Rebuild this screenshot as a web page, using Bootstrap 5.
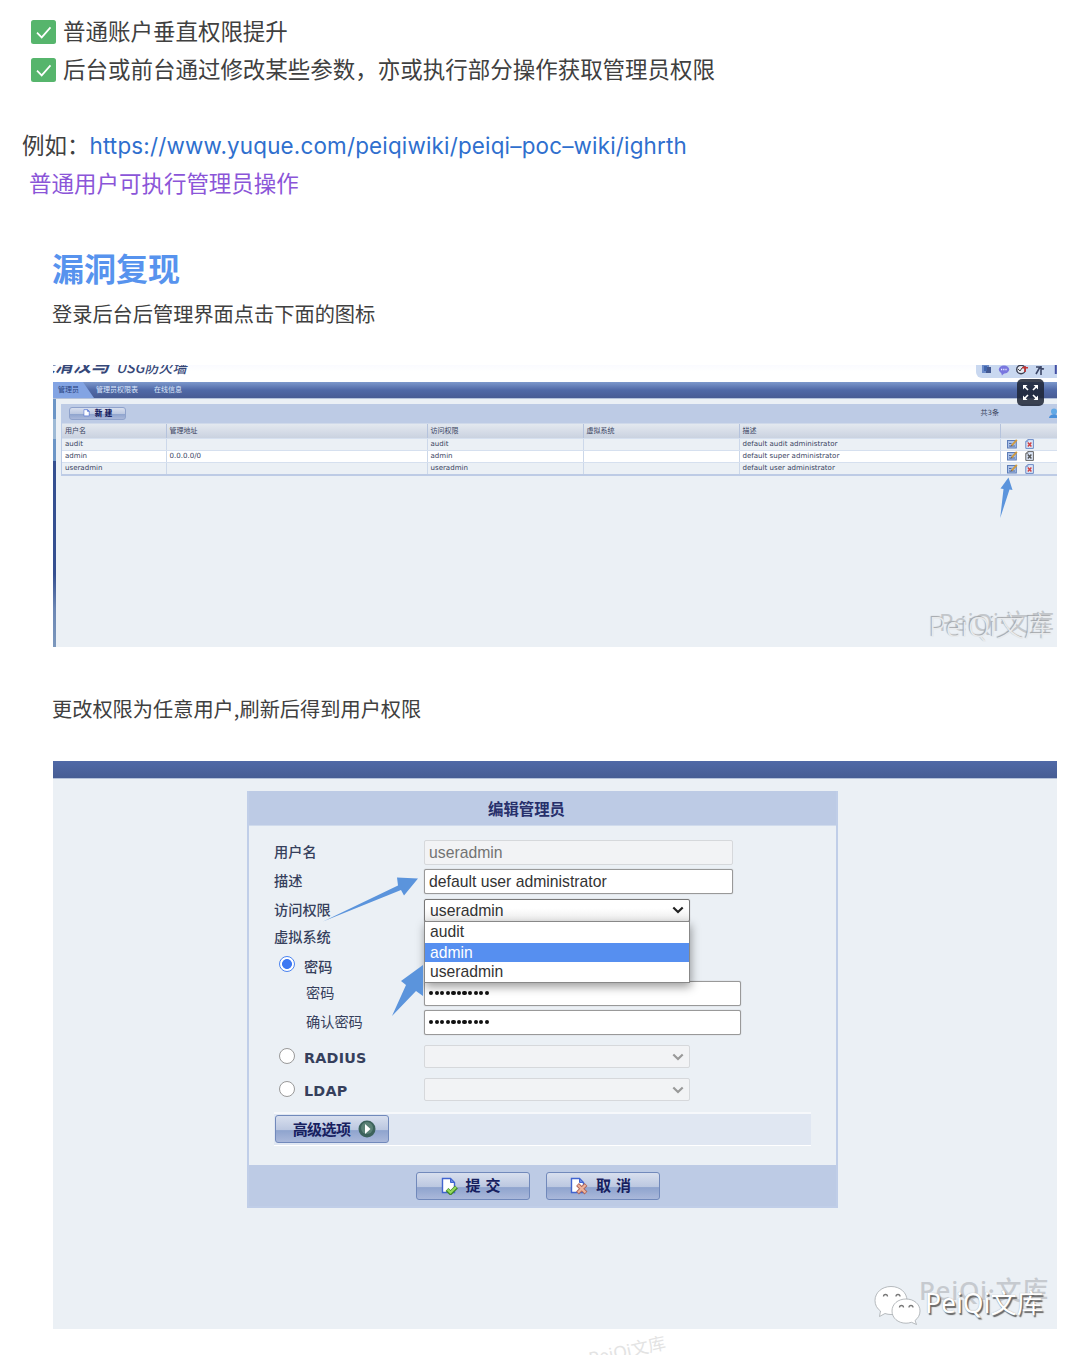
<!DOCTYPE html>
<html lang="zh-CN">
<head>
<meta charset="utf-8">
<title>权限提升</title>
<link href="https://cdn.jsdelivr.net/npm/bootstrap@5.3.0/dist/css/bootstrap.min.css" rel="stylesheet">
<style>
html,body{background:#fff;overflow:hidden}
body{width:1080px;height:1355px;position:relative;font-family:"Noto Sans CJK SC",sans-serif;color:#404040}
.doc-top{height:365px;padding-top:11px}
.doc-line{height:38px;font-size:22.49px;line-height:38px;white-space:nowrap}
.tick{width:25px;height:24px;margin:3px 7px 0 0;flex:none}
.doc-link{font-family:Inter,"Noto Sans CJK SC",sans-serif;font-size:22.4px;color:#2f6fce;letter-spacing:.195px;padding-top:2px}
.violet{color:#8b55d8}
.title-sec{font-size:32px;font-weight:700;color:#5793ee;line-height:46px;height:46px;margin:43px 0 0 52px}
.para{font-size:20.22px;line-height:32px;height:32px;margin:0 0 0 52px;white-space:nowrap}
.shot{position:relative;width:1004px;margin-left:53px;overflow:hidden;background:#ebf0f5;color:#39435f}
.shot-a{height:282px;font-family:"DejaVu Sans","Noto Sans CJK SC",sans-serif;font-size:7.05px}
.shot-top{height:17px;background:linear-gradient(#fafbff,#fff 40%);overflow:hidden}
.brand{color:#354778;font-style:italic;white-space:nowrap;font-family:"Noto Sans CJK SC",sans-serif;font-weight:500;height:17px;line-height:17px}
.brand .b1{font-size:18px;font-weight:700;margin:-9px 0 0 -16px}
.brand .b2{font-size:14px;margin:-6px 0 0 7px;line-height:17px}
.tools{width:81px;height:13px;background:#c9d8f0;border-bottom-left-radius:6px;padding-left:5px}
.bluebar{background:linear-gradient(#7c98cc,#5069a7 50%,#485c94);color:#dce6fa;border-bottom:1px solid #b4c1da}
.shot-a .bluebar{height:17px;font-size:7px;line-height:17px}
.tab-on{width:41px;height:16px;background:#83a4e3;color:#28417c;clip-path:polygon(0 0,30px 0,41px 100%,0 100%);padding-left:5px}
.rail{width:3px;height:248px;background:linear-gradient(#6c95c6 0 20px,#9ebad6 20px 40px,#6c95c6 40px 62px,#354f90 62px 175px,#6c87b4 210px,#7c98bd)}
.panel-a{margin:5px 0 0 5px;flex:1;border-left:1px solid #bccce7;height:72px;background:#bdcbe5}
.toolbar-a{height:18.5px}
.gloss{background:linear-gradient(#d8dfee,#bbc7e0 54%,#8fa4ce 56%,#aab8da);border:1px solid #7189bb;border-radius:3px;color:#17205f;font-weight:700;white-space:nowrap}
.btn-new{width:57px;height:13px;margin-left:7px;font-size:7.5px;font-weight:900;border-color:#8fa2cb}
.grid-a{display:grid;grid-template-columns:103.5px 261px 156px 156px 261px 1fr;white-space:nowrap}
.grid-a>div{border-left:1px solid #ccd8ea;padding-left:3px;overflow:hidden}
.grid-a>div:first-child{border-left:0}
.grid-h{height:15.3px;line-height:14.5px;font-size:7px;background:linear-gradient(#e3e8ef,#cad2e0);border-top:1px solid #cfd9ea}
.grid-h>div{border-color:#b5c3dd!important}
.grid-r{height:12.2px;line-height:9.5px;background:#ebf0f5;border-top:1px solid #d6e0ef}
.grid-r.wh{background:#fff}
.grid-r svg{display:inline-block;vertical-align:top;margin-top:.5px}
.grid-r svg.ed{margin-left:3px;margin-right:7px}
.over{position:absolute;left:0;top:0}
.expand{position:absolute;left:964px;top:13.5px;width:27px;height:27px}
.wm{position:absolute;font-family:"Noto Sans","Noto Sans CJK SC",sans-serif;font-weight:300;white-space:nowrap;line-height:1.2}
.wm-a2{left:886px;top:243px;font-size:24px;color:#c3c7cb;font-weight:400;letter-spacing:.2px}
.wm-a1{left:876px;top:245px;font-size:28.3px;color:#e8eaec;text-shadow:-1px -1px 1px #a0a3a6}
.wm-b1{left:872px;top:527px;font-size:26.5px;color:#fff;font-weight:400;text-shadow:1.5px 1.5px 1px #666,0 0 1px #999}
.wm-b2{left:866px;top:514px;font-size:26px;color:#c6cacf;font-weight:500;letter-spacing:.7px}
.wm-c{left:588px;top:1340px;font-size:17.5px;color:#e3e3e3;font-weight:400;transform:rotate(-12deg)}
.shot-b{height:568px}
.shot-b .bluebar{height:18px;background:linear-gradient(#5069a7,#465d94)}
.dlg{width:591px;margin:12px 0 0 194px;border:2px solid #c0cee8;border-top:0;background:#bdcbe5;height:417px}
.dlg-h{height:35px;line-height:35px;text-align:center;font-size:15.4px;font-weight:700;color:#27306b;padding-right:32px;border-bottom:1px solid #d0dbec}
.dlg-b{height:339px;background:#ebf0f5;padding:12px 24px 0 25px;font-size:14.2px;color:#36405c;font-weight:500}
.f-row{display:flex;align-items:center}
.f-row>.lab{width:150px;flex:none;white-space:nowrap;display:flex;align-items:center;margin-top:-1px}
.f-row>.sub{padding-left:32px;margin-top:0;font-weight:400}
.fld{border:1px solid #999;border-radius:2px;background:#fff;height:25px;font:15.75px/23px "Liberation Sans",sans-serif;color:#333;padding-left:4px;width:308.5px;white-space:nowrap;box-shadow:0 0 1px #999}
.fld.dis{background:#f2f3f5;border-color:#d6d8db;color:#737373;box-shadow:none}
.fld.pw{width:316.5px;display:flex;align-items:center;gap:1.4px}
.fld.sel{width:265.5px;height:23px;line-height:21px;padding:0 5px 0 5px;display:flex;justify-content:space-between;align-items:center}
.fld.act{background:linear-gradient(#fff 40%,#ececec);border-color:#777}
.pw i{width:4.2px;height:4.2px;border-radius:50%;background:#111}
.rad{width:16px;height:16px;border-radius:50%;border:1.5px solid #999;background:#fff;margin:0 9px 0 5px}
.rad.on{border-color:#4a83f0;background:radial-gradient(#3d78f2 0 4.6px,#fff 5.3px)}
.verd{font:700 14.3px "DejaVu Sans",sans-serif;letter-spacing:.25px;padding-top:4px}
.menu-d{position:absolute;left:371px;top:160px;width:265.5px;height:62px;background:#fff;border:1px solid #888;box-shadow:1px 4px 9px rgba(0,0,0,.38);font:15.7px/19.5px "Liberation Sans",sans-serif;color:#333}
.menu-d div{padding-left:5px;height:19.5px}
.menu-d .hl{background:#568ff0;color:#fff;margin-top:1px}
.adv{height:34px;width:537px;background:#e0e7f2;border-top:2px solid #f6f8fb;border-bottom:1px solid #fff;margin-top:6px;display:flex;align-items:center}
.gbtn{width:114px;height:28px;font-size:15px;display:flex;align-items:center;justify-content:center}
.gbtn.wide{letter-spacing:-.6px;padding-left:5px;margin:-1px 0 0 1px}
.dlg-f{height:41px;display:flex;gap:16px;padding-left:167px;align-items:center}
.dlg-f .gbtn{padding-right:5px;word-spacing:1.5px}
</style>
<script src="https://cdn.jsdelivr.net/npm/bootstrap@5.3.0/dist/js/bootstrap.bundle.min.js"></script>
</head>
<body>
<svg width="0" height="0" class="position-absolute">
 <defs>
 <symbol id="tick" viewBox="0 0 25 24"><rect width="25" height="24" rx="2.5" fill="#56b56c"/><path d="M6 12.600l4.700 4.800 8.800-10" fill="none" stroke="#fff" stroke-width="1.700"/></symbol>
 <symbol id="edit" viewBox="0 0 11 10"><rect x=".5" y="1.500" width="8.800" height="7.500" fill="#a9c0e8" stroke="#5d7db8"/><path d="M2 4.500h2.500M2 7h6" stroke="#38568f" stroke-width=".8"/><path d="M4.600 6.600L9.800.8" stroke="#cf9a3e" stroke-width="1.900"/><path d="M3.900 7.500l1-1.300" stroke="#654"/></symbol>
 <symbol id="del" viewBox="0 0 9 10"><path d="M2.800.6h5.600v8.800H.8V2.600z" fill="#dce6f8" stroke="currentColor"/><path d="M2.800.6v2H.8" fill="none" stroke="currentColor" stroke-width=".8"/><path d="M2.800 3.600l3.600 3.800m0-3.800L2.800 7.400" stroke="var(--x)" stroke-width="1.500"/></symbol>
 <symbol id="page" viewBox="0 0 17 18"><path d="M1.500 1.500h8l4 4v10h-12z" fill="#fff" stroke="#4164cf" stroke-width="1.400"/><path d="M9.500 1.500v4h4z" fill="#6b8be5" stroke="#4164cf"/></symbol>
 <symbol id="chev" viewBox="0 0 12 8"><path d="M1.300 1.500L6 6l4.700-4.500" fill="none" stroke="currentColor" stroke-width="2.200"/></symbol>
 </defs>
</svg>

<header class="doc-top">
 <div class="doc-line d-flex align-items-center" style="padding-left:31px"><svg class="tick"><use href="#tick"/></svg><span>普通账户垂直权限提升</span></div>
 <div class="doc-line d-flex align-items-center" style="padding-left:31px"><svg class="tick"><use href="#tick"/></svg><span>后台或前台通过修改某些参数，亦或执行部分操作获取管理员权限</span></div>
 <div class="doc-line"></div>
 <div class="doc-line d-flex" style="padding-left:22px"><span>例如：</span><a class="doc-link text-decoration-none" href="#">https://www.yuque.com/peiqiwiki/peiqi–poc–wiki/ighrth</a></div>
 <div class="doc-line violet" style="padding-left:29px">普通用户可执行管理员操作</div>
 <h2 class="title-sec">漏洞复现</h2>
 <p class="para mt-2">登录后台后管理界面点击下面的图标</p>
</header>

<section class="shot shot-a">
 <div class="shot-top d-flex justify-content-between">
  <div class="brand d-flex"><div class="b1">天清汉马</div><div class="b2">USG防火墙</div></div>
  <div class="tools">
   <svg width="76" height="12" viewBox="0 0 76 12" class="d-block"><rect x="1" y="0" width="7" height="8" fill="#6c8bc9"/><rect x="5" y="2" width="5" height="6" fill="#435891"/><path d="M3 1h3v5H3z" fill="#4166ad"/><ellipse cx="23" cy="4.500" rx="5.200" ry="4" fill="#7977df"/><path d="M20 7.500l1 3 3-3" fill="#7977df"/><path d="M20 4.500h6" stroke="#e9ebff" stroke-width="1.400" stroke-dasharray="1.200 1"/><circle cx="40" cy="4.500" r="4.300" fill="#e6e9f2" stroke="#3b4155" stroke-width="1.400"/><path d="M37 4l2 2 2-3" stroke="#444" fill="none"/><path d="M44 7V1m-3 1.700h6" stroke="#c43535" stroke-width="1.600"/><path d="M55 9l4-7m-4 0h5v4m0 4V1m-2 2l5 1" stroke="#3b4667" stroke-width="1.600" fill="none"/><path d="M74.800 0v9" stroke="#4350a4" stroke-width="2"/></svg>
  </div>
 </div>
 <div class="bluebar d-flex"><div class="tab-on">管理员</div><div style="margin-left:2px;width:58px">管理员权限表</div><div>在线信息</div></div>
 <div class="d-flex">
  <div class="rail"></div>
  <div class="panel-a">
   <div class="toolbar-a d-flex align-items-center">
    <div class="gloss btn-new d-flex align-items-center justify-content-center"><svg width="8" height="8" class="me-1" viewBox="0 0 17 18"><use href="#page"/></svg>新 建</div>
    <span class="ms-auto" style="margin-right:45px">共3条</span>
    <svg width="8" height="11" viewBox="0 0 8 11" style="margin-left:5px"><circle cx="5" cy="3.500" r="3" fill="#62a9e6"/><path d="M0 10c0-4 8-5 8-2v2z" fill="#4b91da"/></svg>
   </div>
   <div class="grid-a grid-h"><div>用户名</div><div>管理地址</div><div>访问权限</div><div>虚拟系统</div><div>描述</div><div></div></div>
   <div class="grid-a grid-r"><div>audit</div><div></div><div>audit</div><div></div><div>default audit administrator</div><div><svg class="ed" width="11" height="10"><use href="#edit"/></svg><svg width="9" height="10" style="color:#6d8cc7;--x:#d04444"><use href="#del"/></svg></div></div>
   <div class="grid-a grid-r wh"><div>admin</div><div>0.0.0.0/0</div><div>admin</div><div></div><div>default super administrator</div><div><svg class="ed" width="11" height="10"><use href="#edit"/></svg><svg width="9" height="10" style="color:#666;--x:#555"><use href="#del"/></svg></div></div>
   <div class="grid-a grid-r"><div>useradmin</div><div></div><div>useradmin</div><div></div><div>default user administrator</div><div><svg class="ed" width="11" height="10"><use href="#edit"/></svg><svg width="9" height="10" style="color:#6d8cc7;--x:#d04444"><use href="#del"/></svg></div></div>
  </div>
 </div>
 <svg class="over" width="1004" height="282"><path d="M947.200 153L950.500 124l-3-.5 8-11 4 12.500-3-.5z" fill="#5b94dc"/></svg>
 <svg class="expand" viewBox="0 0 27 27"><rect width="27" height="27" rx="5" fill="#1d2434" fill-opacity=".86"/><g stroke="#fff" stroke-width="1.700" fill="#fff"><path d="M11 11L7 7M16 11l4-4M11 16l-4 4M16 16l4 4"/><path stroke="none" d="M6 6h4.500L6 10.500zM21 6v4.500L16.500 6zM6 21v-4.500l4.500 4.500zM21 21h-4.500l4.500-4.500z"/></g></svg>
 <div class="wm wm-a2">PeiQi·文库</div><div class="wm wm-a1">PeiQi文库</div>
</section>

<div style="height:114px;padding-top:46px"><p class="para">更改权限为任意用户,刷新后得到用户权限</p></div>

<section class="shot shot-b">
 <div class="bluebar"></div>
 <div class="dlg">
  <div class="dlg-h">编辑管理员</div>
  <div class="dlg-b">
   <div class="f-row" style="height:29px"><div class="lab">用户名</div><div class="fld dis">useradmin</div></div>
   <div class="f-row" style="height:29px"><div class="lab">描述</div><div class="fld">default user administrator</div></div>
   <div class="f-row" style="height:28px"><div class="lab">访问权限</div><div class="fld sel act">useradmin<svg width="12" height="8" style="color:#222"><use href="#chev"/></svg></div></div>
   <div class="f-row" style="height:27px"><div class="lab">虚拟系统</div></div>
   <div class="f-row" style="height:28px"><div class="lab"><span class="rad on"></span><span class="pt-1">密码</span></div></div>
   <div class="f-row" style="height:28px"><div class="lab sub">密码</div><div class="fld pw"><i></i><i></i><i></i><i></i><i></i><i></i><i></i><i></i><i></i><i></i><i></i></div></div>
   <div class="f-row" style="height:30px"><div class="lab sub">确认密码</div><div class="fld pw"><i></i><i></i><i></i><i></i><i></i><i></i><i></i><i></i><i></i><i></i><i></i></div></div>
   <div class="f-row" style="height:33px;margin-top:3px"><div class="lab"><span class="rad"></span><span class="verd">RADIUS</span></div><div class="fld sel dis"><span></span><svg width="12" height="8" style="color:#999"><use href="#chev"/></svg></div></div>
   <div class="f-row" style="height:33px"><div class="lab"><span class="rad"></span><span class="verd">LDAP</span></div><div class="fld sel dis"><span></span><svg width="12" height="8" style="color:#999"><use href="#chev"/></svg></div></div>
   <div class="adv"><div class="gloss gbtn wide">高级选项<svg width="18" height="18" class="ms-2" viewBox="0 0 18 18"><circle cx="9" cy="9" r="8.500" fill="#3c625b"/><circle cx="9" cy="8" r="6" fill="#5b8176"/><path d="M7 4l5.500 5L7 14z" fill="#fff"/></svg></div></div>
  </div>
  <div class="dlg-f">
   <div class="gloss gbtn"><svg width="17" height="18" class="me-2"><use href="#page"/><path d="M6 12.500l3.500 3.500 6-6" fill="none" stroke="#40862c" stroke-width="4"/><path d="M6.500 12.500l3 3 5.500-5.500" fill="none" stroke="#96dc5a" stroke-width="2.200"/></svg>提 交</div>
   <div class="gloss gbtn"><svg width="18" height="18" class="me-2"><use href="#page" width="17" height="18"/><path d="M7.500 7.500l8.500 8.500m0-8.500L7.500 16" stroke="#ad655b" stroke-width="4"/><path d="M8 8l7.500 7.500m0-7.500L8 15.500" stroke="#eeb49c" stroke-width="2.200"/></svg>取 消</div>
  </div>
 </div>
 <div class="menu-d"><div>audit</div><div class="hl">admin</div><div>useradmin</div></div>
 <svg class="over" width="1004" height="568"><g fill="#5b94dc"><path d="M270 160.500L345 124.500l-1-8 21 1-14 17-3-5.500z"/><path d="M339 255l14-31-5-4 22-16v31l-7-5z"/></g></svg>
 <div class="wm wm-b2">PeiQi·文库</div>
 <svg class="over" width="1004" height="568"><g fill="#fff" stroke="#a5a9ad" stroke-width=".8"><path d="M838 525.500c9 0 16 6 16 14s-7 14-16 14c-2 0-4-.3-6-1l-5.500 3 1-5.500c-3.500-2.500-5.500-6-5.500-10.500 0-8 7-14 16-14z"/><path d="M853 538c8 0 14 5.200 14 12 0 4-2 7.300-5 9.500l1.500 4-5-2.200c-2 .6-3.500.9-5.500.9-8 0-14-5.200-14-12.200s6-12 14-12z"/></g><g fill="none" stroke="#777" stroke-width="1.300"><path d="M830.500 535.500a2 2 0 114 0M843 535.500a2 2 0 114 0M846.500 546.500a2 2 0 114 0M856 546.500a2 2 0 114 0"/></g></svg>
 <div class="wm wm-b1">PeiQi文库</div>
</section>
<div class="wm wm-c">PeiQi文库</div>
</body>
</html>
